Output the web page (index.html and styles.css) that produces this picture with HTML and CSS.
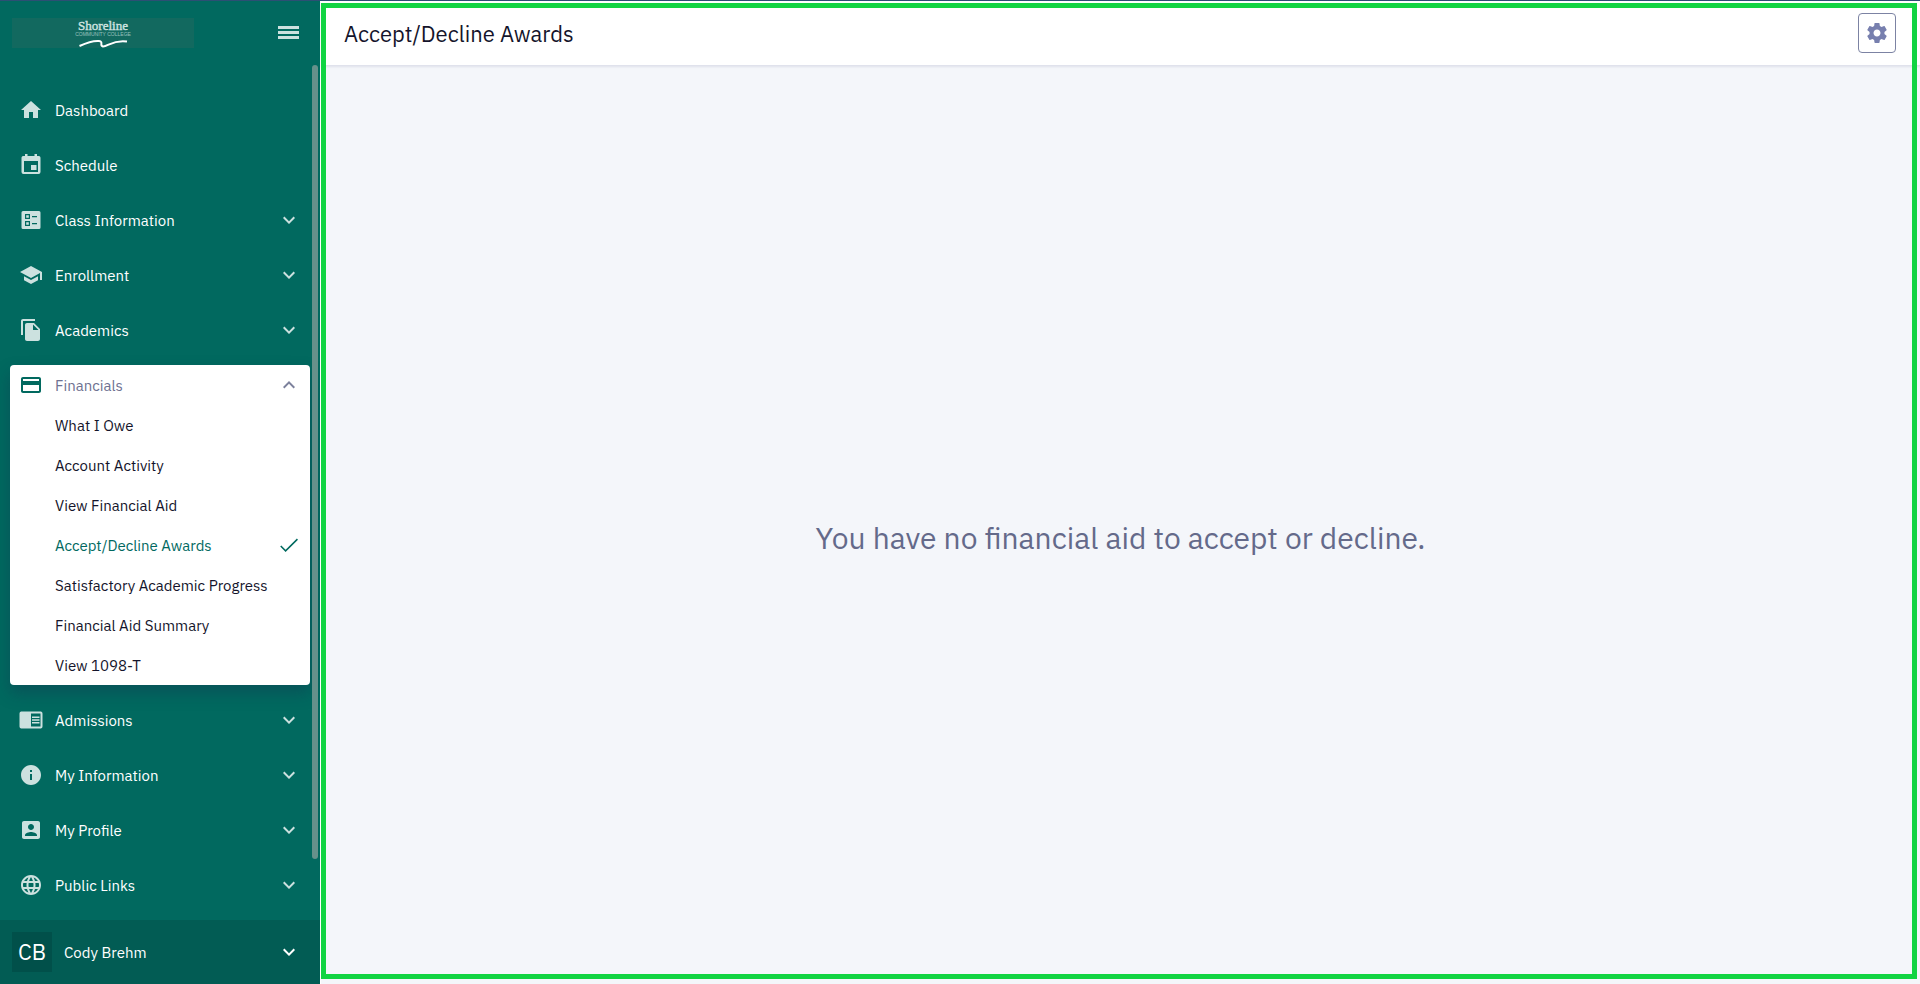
FILE: index.html
```html
<!DOCTYPE html>
<html lang="en">
<head>
    <meta charset="UTF-8">
    <meta name="viewport" content="width=device-width, initial-scale=1">
    <title>Accept/Decline Awards</title>
    <link rel="stylesheet" href="styles.css">
</head>
<body>
    <svg class="sprite" aria-hidden="true">
        <symbol id="chevron" viewBox="0 0 24 24"><path d="M16.6 8.6 12 13.2 7.4 8.6 6 10l6 6 6-6z"/></symbol>
    </svg>
    <div class="app">
        <aside class="sidebar">
            <div class="brand">
                <svg class="logo" viewBox="0 0 182 30" role="img" aria-label="Shoreline Community College">
                    <text class="logo-name" x="91" y="12">Shoreline</text>
                    <text class="logo-sub" x="91" y="18">COMMUNITY COLLEGE</text>
                    <path d="M67.500 28C74 25 81 22.500 87 23 92 23.500 87 28 91 28.500 96 28.500 101 21.500 115 23.500" fill="none" stroke="#fff" stroke-width="2"/>
                </svg>
                <button class="menu-button" type="button" aria-label="Toggle menu">
                    <svg viewBox="0 0 24 24"><path d="M2 5h21v3H2zM2 10h21v3H2zM2 15h21v3H2z"/></svg>
                </button>
            </div>
            <nav class="nav">
                <a class="nav-item" href="#">
                    <svg class="icon" viewBox="0 0 24 24"><path d="M10 20v-6h4v6h5v-8h3L12 3 2 12h3v8z"/></svg>
                    <span>Dashboard</span>
                </a>
                <a class="nav-item" href="#">
                    <svg class="icon" viewBox="0 0 24 24"><path fill-rule="evenodd" d="M5 3h1V1h2.500v2h7V1H18v2h1a2 2 0 0 1 2.500 2v14a2 2 0 0 1-2 2h-15a2 2 0 0 1-2-2V5A2 2 0 0 1 5 3zM5 8v11h14V8zM12 12h5.500v5H12z"/></svg>
                    <span>Schedule</span>
                </a>
                <button class="nav-item" type="button">
                    <svg class="icon" viewBox="0 0 24 24"><path fill-rule="evenodd" d="M4 3h16a1.500 1.500 0 0 1 1.500 1.500v15A1.500 1.500 0 0 1 20 21H4a1.500 1.500 0 0 1-1.500-1.500v-15A1.500 1.500 0 0 1 4 3zM6 6v5h5V6zM7.200 7.200h2.600v2.600H7.200zM6 13v5h5v-5zM7.200 14.200h2.600v2.600H7.200zM13 8v1.200h5V8zM13 15v1.200h5V15z"/></svg>
                    <span>Class Information</span>
                    <svg class="chevron"><use href="#chevron"/></svg>
                </button>
                <button class="nav-item" type="button">
                    <svg class="icon" viewBox="0 0 24 24"><path d="M5 13.180v4L12 21l7-3.820v-4L12 17l-7-3.820zM12 3 1 9l11 6 9-4.910V17h2V9L12 3z"/></svg>
                    <span>Enrollment</span>
                    <svg class="chevron"><use href="#chevron"/></svg>
                </button>
                <button class="nav-item" type="button">
                    <svg class="icon" viewBox="0 0 24 24"><path d="M16 1H4c-1.100 0-2 .9-2 2v14h2V3h12V1zm-1 4 6 6v10c0 1.100-.9 2-2 2H7.990C6.890 23 6 22.100 6 21l.01-14c0-1.100.89-2 1.990-2h7zm-1 7h5.500L14 6.500V12z"/></svg>
                    <span>Academics</span>
                    <svg class="chevron"><use href="#chevron"/></svg>
                </button>
                <div class="nav-group">
                    <button class="nav-item nav-open" type="button" aria-expanded="true">
                        <svg class="icon" viewBox="0 0 24 24"><path d="M20 4H4c-1.110 0-1.990.89-1.990 2L2 18c0 1.110.89 2 2 2h16c1.110 0 2-.89 2-2V6c0-1.110-.89-2-2-2zm0 14H4v-6h16v6zm0-10H4V6h16v2z"/></svg>
                        <span>Financials</span>
                        <svg class="chevron"><use href="#chevron"/></svg>
                    </button>
                    <a class="sub-item" href="#">What I Owe</a>
                    <a class="sub-item" href="#">Account Activity</a>
                    <a class="sub-item" href="#">View Financial Aid</a>
                    <a class="sub-item current" href="#" aria-current="page">Accept/Decline Awards
                        <svg class="check" viewBox="0 0 24 24"><path d="M8.600 16.700 4.300 12.400l-1.100 1.100L8.600 19 21 6.700l-1.100-1.100z"/></svg>
                    </a>
                    <a class="sub-item" href="#">Satisfactory Academic Progress</a>
                    <a class="sub-item" href="#">Financial Aid Summary</a>
                    <a class="sub-item" href="#">View 1098-T</a>
                </div>
                <button class="nav-item" type="button">
                    <svg class="icon" viewBox="0 0 24 24"><path fill-rule="evenodd" d="M2 3.500h20a2 2 0 0 1 1.500 2v13a2 2 0 0 1-1.500 2H2a2 2 0 0 1-1.500-2v-13A2 2 0 0 1 2 3.500zM12 5.500v13h9.500v-13zM13 8.500h7.500V10H13zM13 11.200h7.500v1.500H13zM13 14h7.500v1.500H13z"/></svg>
                    <span>Admissions</span>
                    <svg class="chevron"><use href="#chevron"/></svg>
                </button>
                <button class="nav-item" type="button">
                    <svg class="icon" viewBox="0 0 24 24"><path d="M12 2C6.480 2 2 6.480 2 12s4.480 10 10 10 10-4.480 10-10S17.520 2 12 2zm1 15h-2v-6h2v6zm0-8h-2V7h2v2z"/></svg>
                    <span>My Information</span>
                    <svg class="chevron"><use href="#chevron"/></svg>
                </button>
                <button class="nav-item" type="button">
                    <svg class="icon" viewBox="0 0 24 24"><path d="M3 5v14c0 1.100.89 2 2 2h14c1.100 0 2-.9 2-2V5c0-1.100-.9-2-2-2H5c-1.110 0-2 .9-2 2zm12 4c0 1.660-1.340 3-3 3s-3-1.340-3-3 1.340-3 3-3 3 1.340 3 3zm-9 8c0-2 4-3.100 6-3.100s6 1.100 6 3.100v1H6v-1z"/></svg>
                    <span>My Profile</span>
                    <svg class="chevron"><use href="#chevron"/></svg>
                </button>
                <button class="nav-item" type="button">
                    <svg class="icon" viewBox="0 0 24 24"><path d="M11.990 2C6.470 2 2 6.480 2 12s4.470 10 9.990 10C17.520 22 22 17.520 22 12S17.520 2 11.990 2zm6.930 6h-2.950c-.32-1.250-.78-2.450-1.380-3.560 1.840.63 3.370 1.910 4.330 3.560zM12 4.040c.83 1.200 1.480 2.530 1.910 3.960h-3.820c.43-1.430 1.080-2.760 1.910-3.960zM4.260 14C4.100 13.360 4 12.690 4 12s.1-1.360.26-2h3.380c-.08.66-.14 1.320-.14 2s.06 1.340.14 2H4.260zm.82 2h2.950c.32 1.250.78 2.450 1.380 3.560-1.840-.63-3.370-1.900-4.330-3.560zm2.950-8H5.080c.96-1.660 2.490-2.930 4.330-3.560C8.810 5.550 8.350 6.750 8.030 8zM12 19.960c-.83-1.200-1.480-2.530-1.910-3.960h3.820c-.43 1.430-1.080 2.760-1.910 3.960zM14.340 14H9.660c-.09-.66-.16-1.320-.16-2s.07-1.350.16-2h4.680c.09.65.16 1.320.16 2s-.07 1.340-.16 2zm.25 5.560c.6-1.110 1.060-2.310 1.380-3.560h2.950c-.96 1.650-2.490 2.930-4.330 3.560zM16.360 14c.08-.66.14-1.320.14-2s-.06-1.340-.14-2h3.380c.16.64.26 1.310.26 2s-.1 1.360-.26 2h-3.380z"/></svg>
                    <span>Public Links</span>
                    <svg class="chevron"><use href="#chevron"/></svg>
                </button>
            </nav>
            <button class="user" type="button">
                <span class="avatar">CB</span>
                <span>Cody Brehm</span>
                <svg class="chevron"><use href="#chevron"/></svg>
            </button>
            <div class="scroll-thumb"></div>
        </aside>
        <main class="main">
            <header class="page-header">
                <h1>Accept/Decline Awards</h1>
                <button class="settings" type="button" aria-label="Settings">
                    <svg viewBox="0 0 24 24"><path d="M19.430 12.980c.04-.32.07-.64.07-.98s-.03-.66-.07-.98l2.110-1.650c.19-.15.24-.42.12-.64l-2-3.460c-.12-.22-.39-.3-.61-.22l-2.490 1c-.52-.4-1.080-.73-1.690-.98l-.38-2.650C14.460 2.180 14.250 2 14 2h-4c-.25 0-.46.18-.49.42l-.38 2.650c-.61.25-1.170.59-1.690.98l-2.490-1c-.23-.09-.49 0-.61.22l-2 3.460c-.13.22-.07.49.12.64l2.110 1.650c-.04.32-.07.65-.07.98s.03.66.07.98l-2.110 1.650c-.19.15-.24.42-.12.64l2 3.460c.12.22.39.3.61.22l2.490-1c.52.4 1.080.73 1.690.98l.38 2.650c.03.24.24.42.49.42h4c.25 0 .46-.18.49-.42l.38-2.650c.61-.25 1.170-.59 1.690-.98l2.490 1c.23.09.49 0 .61-.22l2-3.460c.12-.22.07-.49-.12-.64l-2.110-1.650zM12 15.500c-1.930 0-3.500-1.570-3.500-3.500s1.570-3.500 3.500-3.500 3.500 1.570 3.500 3.500-1.570 3.500-3.500 3.500z"/></svg>
                </button>
            </header>
            <section class="content">
                <p class="empty">You have no financial aid to accept or decline.</p>
            </section>
        </main>
    </div>
</body>
</html>
```
FILE: styles.css
```css
* {
    box-sizing: border-box;
}
body {
    margin: 0;
    font-family: "IBM Plex Sans", Roboto, sans-serif;
    font-size: 15px;
    color: #14142b;
    background-color: #f4f6fa;
}
button {
    border: 0;
    background: none;
    font: inherit;
    cursor: pointer;
}
a {
    text-decoration: none;
}
.sprite {
    display: none;
}
.app {
    display: flex;
    min-height: 100vh;
    border-top: 1px solid #2c4f74;
}

/* sidebar */
.sidebar {
    position: relative;
    display: flex;
    flex-direction: column;
    flex: 0 0 320px;
    background-color: #01695f;
}
.brand {
    display: flex;
    align-items: center;
    justify-content: space-between;
    height: 64px;
    padding: 0 20px 0 12px;
}
.logo {
    width: 182px;
    height: 30px;
    background-color: #12695f;
}
.logo text {
    text-anchor: middle;
    fill: #cfe3e0;
}
.logo-name {
    font: 13px "Liberation Serif", serif;
    stroke: #cfe3e0;
    stroke-width: 0.4px;
}
.logo-sub {
    font: 5px "Liberation Sans", sans-serif;
    opacity: 0.7;
}
.menu-button {
    padding: 0;
}
.menu-button svg {
    display: block;
    width: 24px;
    height: 24px;
    fill: #cce1df;
}
.nav {
    display: flex;
    flex-direction: column;
    gap: 15px;
    flex: 1;
    padding: 25px 10px 15px;
}
.nav-item {
    display: flex;
    align-items: center;
    gap: 12px;
    width: 100%;
    height: 40px;
    padding: 0 9px;
    color: #fff;
    text-align: left;
}
.icon,
.chevron,
.check {
    flex: none;
    width: 24px;
    height: 24px;
    fill: #cce1df;
}
.chevron,
.check {
    margin-left: auto;
}
.nav-group {
    background-color: #fff;
    border-radius: 4px;
    box-shadow: 0 8px 16px rgba(20, 50, 80, 0.4);
}
.nav-open {
    color: #6e7191;
}
.nav-open .icon {
    fill: #01695f;
}
.nav-open .chevron {
    fill: #7c819c;
    transform: rotate(180deg);
}
.sub-item {
    display: flex;
    align-items: center;
    height: 40px;
    padding: 0 9px 0 45px;
    color: #14142b;
}
.current {
    color: #01695f;
}
.check {
    fill: #01695f;
}
.user {
    display: flex;
    align-items: center;
    gap: 12px;
    height: 64px;
    padding: 0 19px 0 12px;
    background-color: #025c54;
    color: #fff;
}
.user .chevron {
    fill: #fff;
}
.avatar {
    width: 40px;
    background-color: #01504a;
    font-size: 22px;
    line-height: 40px;
    text-align: center;
}
.scroll-thumb {
    position: absolute;
    top: 64px;
    right: 2px;
    bottom: 125px;
    width: 6px;
    border-radius: 3px;
    background-color: #66918b;
}

/* page */
.main {
    position: relative;
    display: flex;
    flex-direction: column;
    flex: 1;
    background-color: #f4f6fa;
    border-left: 1px solid #fff;
}
.main::after {
    content: "";
    position: absolute;
    inset: 2px 3px 5px 0;
    border: 5px solid #11d442;
    pointer-events: none;
}
.page-header {
    display: flex;
    align-items: center;
    justify-content: space-between;
    height: 65px;
    padding: 0 24px 0 23px;
    background-color: #fff;
    border-bottom: 1px solid #e0e2ec;
    box-shadow: 0 1px 2px rgba(110, 113, 145, 0.15);
}
.page-header h1 {
    margin: 0;
    font-size: 22px;
    font-weight: 400;
}
.settings {
    display: flex;
    align-items: center;
    justify-content: center;
    width: 38px;
    height: 40px;
    padding: 0;
    border: 1px solid #7c83a3;
    border-radius: 4px;
}
.settings svg {
    width: 24px;
    height: 24px;
    fill: #777fae;
}
.content {
    display: flex;
    align-items: center;
    justify-content: center;
    flex: 1;
    padding: 48px 24px 24px;
}
.empty {
    margin: 0;
    color: #646a8a;
    font-size: 30px;
}
```
